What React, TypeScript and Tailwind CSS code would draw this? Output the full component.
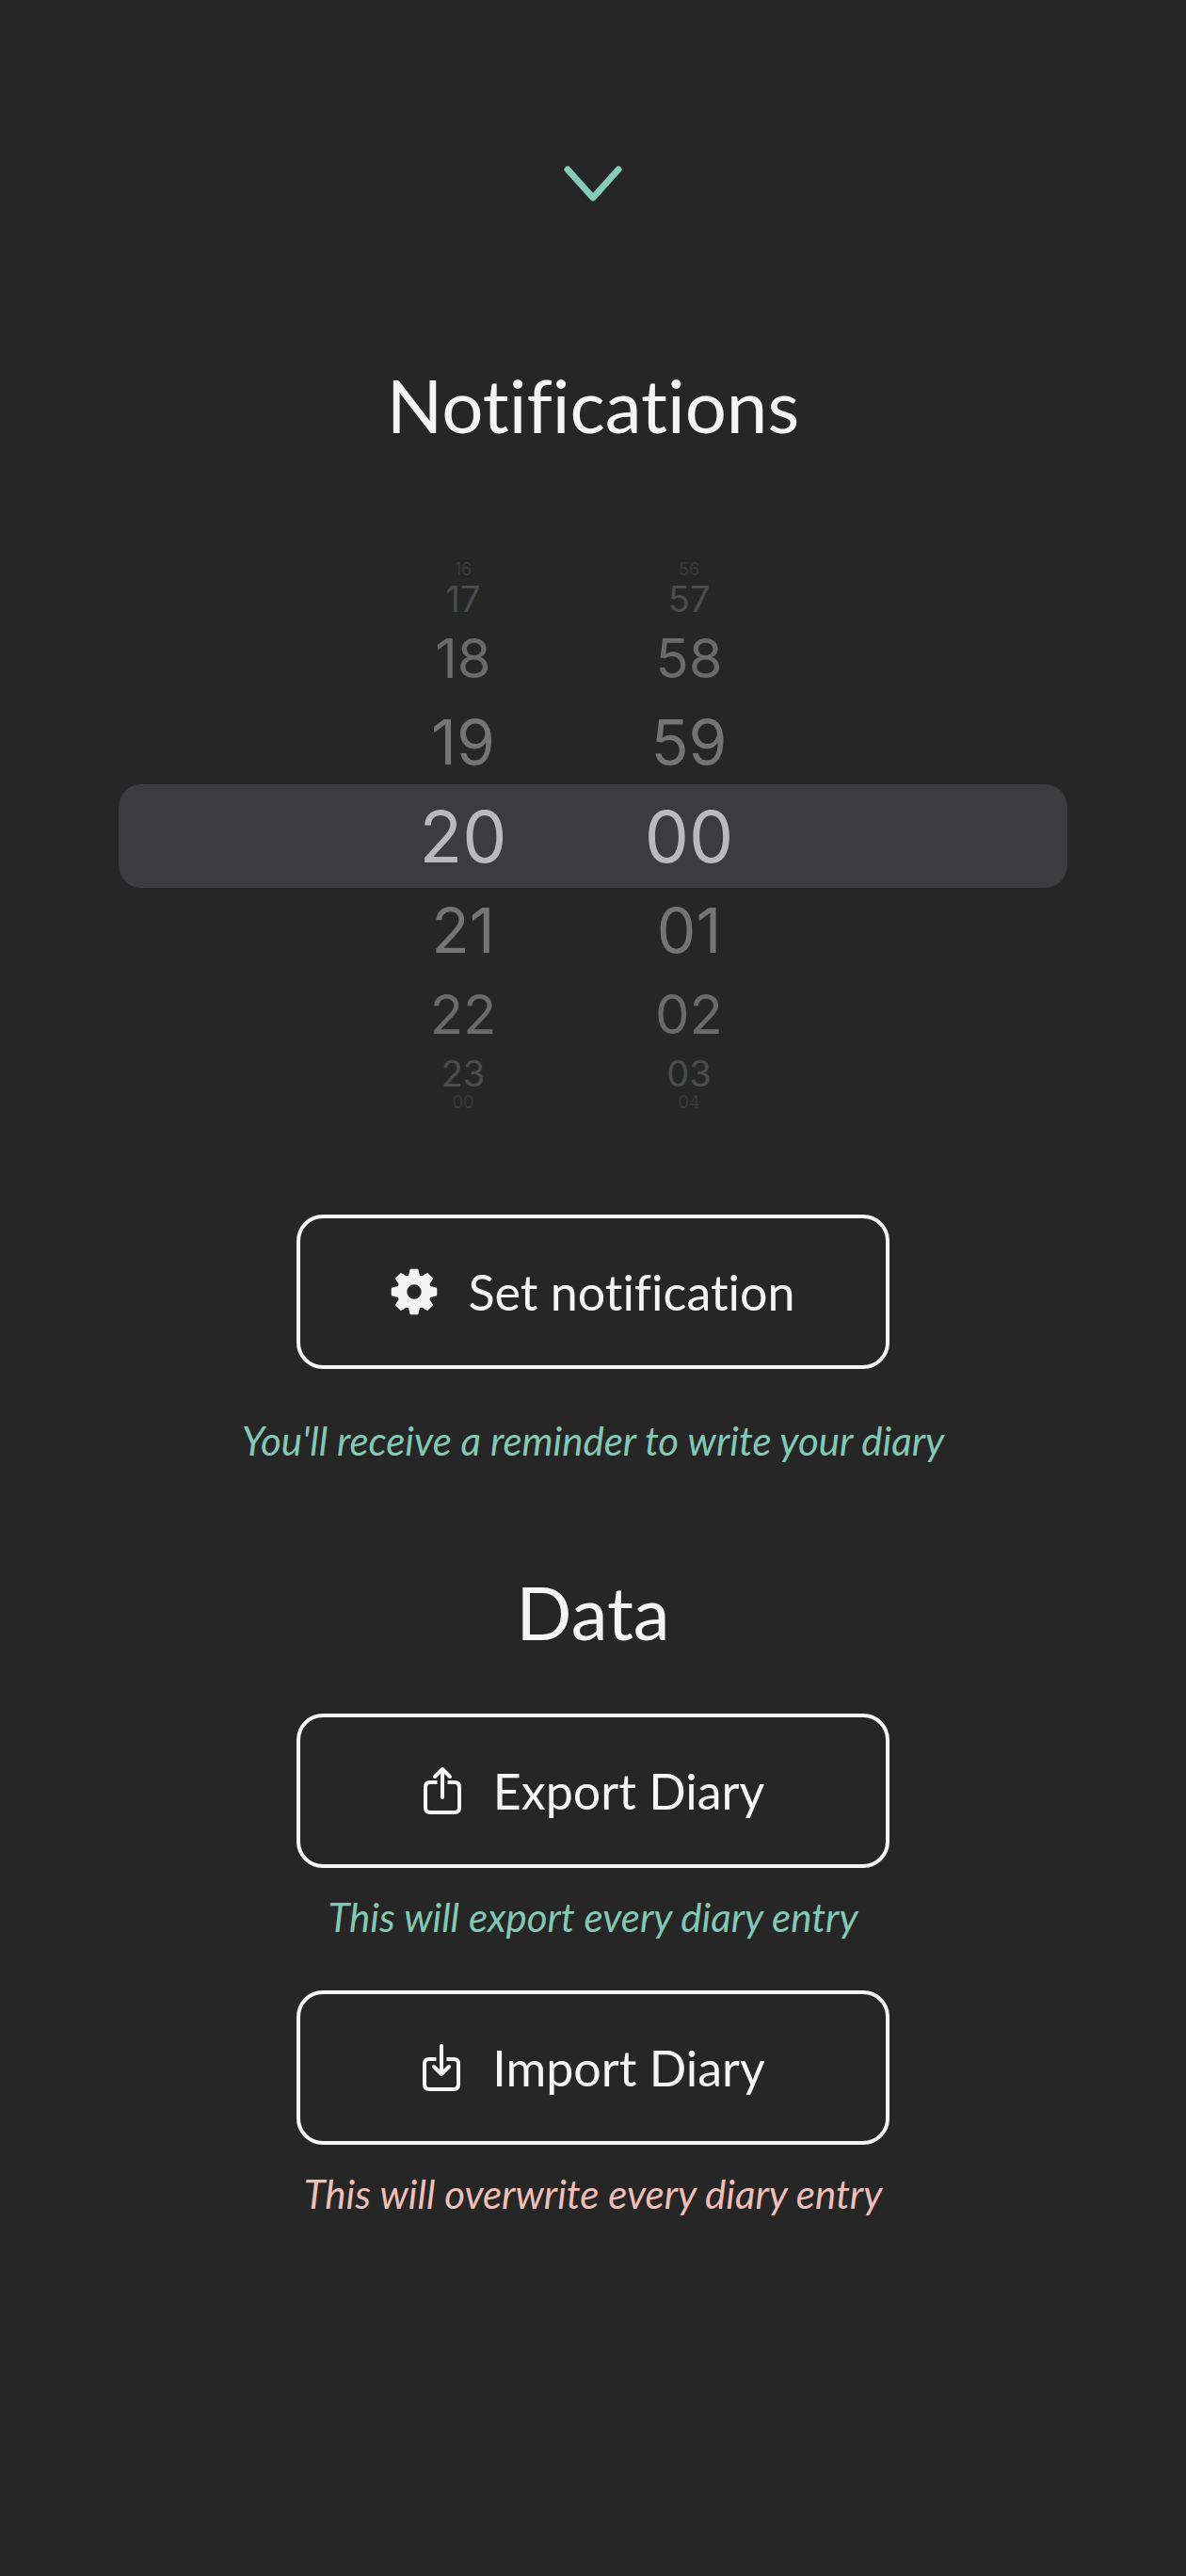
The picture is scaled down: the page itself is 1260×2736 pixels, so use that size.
import { useState, type ReactNode } from 'react';
import clsx from 'clsx';

const WHEEL_ROWS = [
  { offset: -4, className: 'h-6 text-[18px] text-[#3a3a3a]' },
  { offset: -3, className: 'h-[38px] text-[38px] text-[#4c4c4c]' },
  { offset: -2, className: 'h-[88px] text-[58px] text-[#6a6a6a]' },
  { offset: -1, className: 'h-[90px] text-[66px] text-[#747474]' },
  {
    offset: 0,
    className: 'h-[110px] rounded-3xl bg-[#3c3c3e] text-[75px] text-[#b9b9be]',
  },
  { offset: 1, className: 'h-[90px] text-[66px] text-[#747474]' },
  { offset: 2, className: 'h-[88px] text-[58px] text-[#6a6a6a]' },
  { offset: 3, className: 'h-[38px] text-[38px] text-[#4c4c4c]' },
  { offset: 4, className: 'h-6 text-[18px] text-[#3a3a3a]' },
];

const wrap = (value: number, max: number) => (value + max) % max;
const pad = (value: number) => String(value).padStart(2, '0');

function TimePicker() {
  const [hour, setHour] = useState(20);
  const [minute, setMinute] = useState(0);

  return (
    <div
      role="group"
      aria-label="Reminder time"
      className="mt-[115px] flex w-4/5 flex-col font-['Inter',sans-serif] leading-none"
    >
      {WHEEL_ROWS.map(({ offset, className }) => {
        const rowHour = wrap(hour + offset, 24);
        const rowMinute = wrap(minute + offset, 60);
        return (
          <div
            key={offset}
            className={clsx(
              'flex items-center justify-center gap-[120px] pr-9',
              className
            )}
          >
            <button
              type="button"
              aria-pressed={offset === 0}
              className="w-[120px]"
              onClick={() => setHour(rowHour)}
            >
              {pad(rowHour)}
            </button>
            <button
              type="button"
              aria-pressed={offset === 0}
              className="w-[120px]"
              onClick={() => setMinute(rowMinute)}
            >
              {pad(rowMinute)}
            </button>
          </div>
        );
      })}
    </div>
  );
}

function ChevronDownIcon() {
  return (
    <svg
      className="h-[72px] w-[72px]"
      viewBox="0 0 72 72"
      fill="none"
      stroke="#86cdb9"
      strokeWidth="7"
      strokeLinecap="round"
      strokeLinejoin="round"
    >
      <path d="M9 20 36 50 63 20" />
    </svg>
  );
}

function GearIcon() {
  return (
    <svg className="h-[50px] w-[50px]" viewBox="0 0 52 52" fill="currentColor">
      <circle cx="26" cy="26" r="13.5" fill="none" stroke="currentColor" strokeWidth="11" />
      {[0, 45, 90, 135, 180, 225, 270, 315].map((angle) => (
        <path
          key={angle}
          d="M22.5 2h7l2 9h-11z"
          stroke="currentColor"
          strokeWidth="2.5"
          strokeLinejoin="round"
          transform={`rotate(${angle} 26 26)`}
        />
      ))}
    </svg>
  );
}

function BoxArrowIcon({ arrow }: { arrow: string }) {
  return (
    <svg
      className="h-[52px] w-[44px]"
      viewBox="0 0 44 52"
      fill="none"
      stroke="currentColor"
      strokeWidth="4"
      strokeLinejoin="round"
    >
      <path d="M16.5 17H9q-5 0-5 5v22q0 5 5 5h26q5 0 5-5V22q0-5-5-5h-7.5" />
      <path d={arrow} strokeLinecap="round" />
    </svg>
  );
}

function SectionTitle({ children }: { children: ReactNode }) {
  return <h2 className="text-[78px] leading-[96px]">{children}</h2>;
}

function ActionButton({ icon, label }: { icon: ReactNode; label: string }) {
  return (
    <button
      type="button"
      className="flex h-[164px] w-1/2 items-center justify-center gap-8 rounded-[28px] border-4 border-[#f5f5f5] text-[52px]"
    >
      {icon}
      {label}
    </button>
  );
}

function Hint({ warning, children }: { warning?: boolean; children: ReactNode }) {
  return (
    <p
      className={clsx(
        'text-[42px] leading-[56px] italic',
        warning ? 'text-[#efbfb8]' : 'text-[#83c9b5]'
      )}
    >
      {children}
    </p>
  );
}

export default function App() {
  return (
    <main className="flex min-h-screen flex-col items-center bg-[#262626] pt-40 font-['Lato',sans-serif] text-[#f5f5f5] [font-variant-ligatures:none]">
      <button type="button" aria-label="Close settings">
        <ChevronDownIcon />
      </button>

      <section className="mt-[150px] flex w-full flex-col items-center">
        <SectionTitle>Notifications</SectionTitle>
        <TimePicker />
        <div className="mt-[107px] flex w-full flex-col items-center gap-12">
          <ActionButton icon={<GearIcon />} label="Set notification" />
          <Hint>You'll receive a reminder to write your diary</Hint>
        </div>
      </section>

      <section className="mt-[106px] flex w-full flex-col items-center">
        <SectionTitle>Data</SectionTitle>
        <div className="mt-[60px] flex w-full flex-col items-center gap-6">
          <ActionButton
            icon={<BoxArrowIcon arrow="M22 33V3M14 11l8-8 8 8" />}
            label="Export Diary"
          />
          <Hint>This will export every diary entry</Hint>
        </div>
        <div className="mt-[50px] flex w-full flex-col items-center gap-6">
          <ActionButton
            icon={<BoxArrowIcon arrow="M22 3v30M14 25l8 8 8-8" />}
            label="Import Diary"
          />
          <Hint warning>This will overwrite every diary entry</Hint>
        </div>
      </section>
    </main>
  );
}
